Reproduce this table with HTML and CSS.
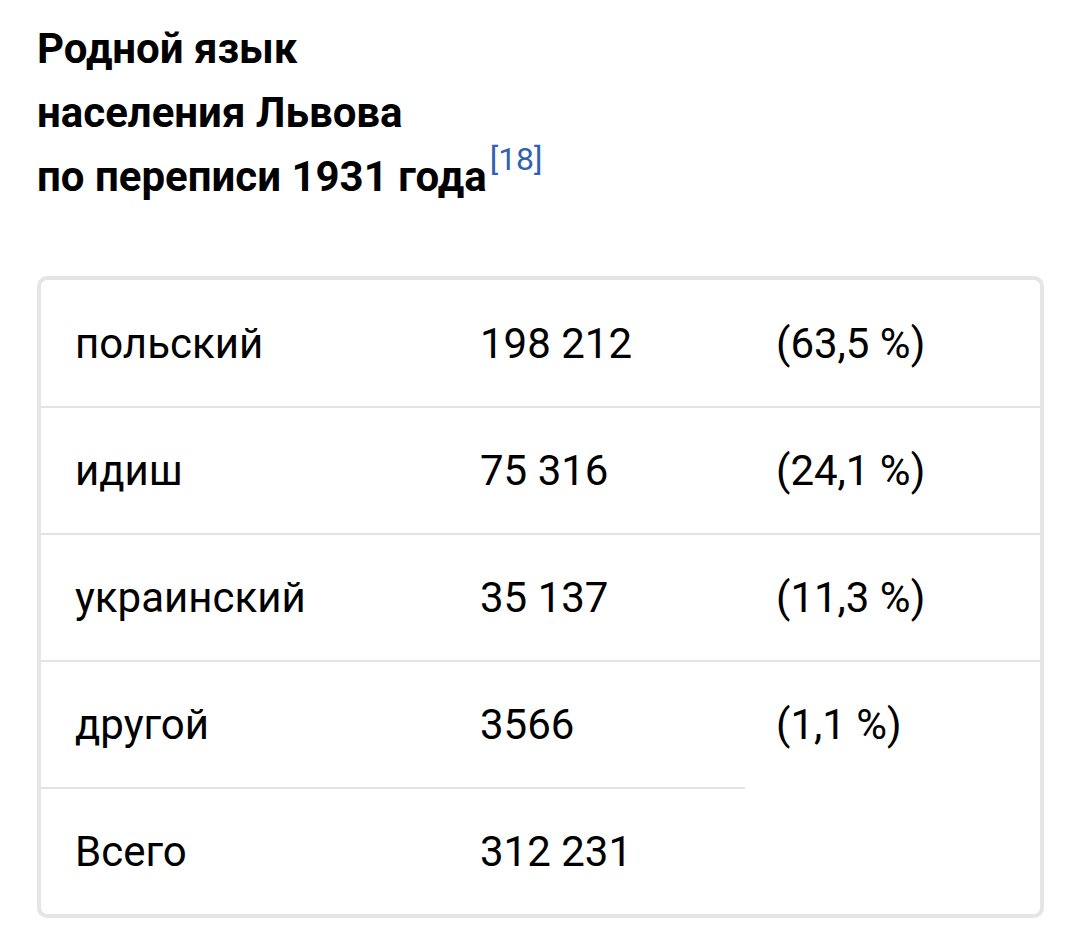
FILE: index.html
```html
<!DOCTYPE html>
<html lang="ru">
<head>
<meta charset="utf-8">
<title>Родной язык населения Львова</title>
<link rel="stylesheet" href="styles.css">
</head>
<body>
<div class="page">
  <h2 class="caption">Родной язык<br>населения Львова<br>по переписи 1931 года<sup class="ref">[18]</sup></h2>
  <table class="census">
    <colgroup>
      <col class="c1"><col class="c2"><col class="c3">
    </colgroup>
    <tbody>
      <tr><td>польский</td><td>198 212</td><td>(63,5 %)</td></tr>
      <tr><td>идиш</td><td>75 316</td><td>(24,1 %)</td></tr>
      <tr><td>украинский</td><td>35 137</td><td>(11,3 %)</td></tr>
      <tr><td>другой</td><td>3566</td><td>(1,1 %)</td></tr>
      <tr><td>Всего</td><td>312 231</td></tr>
    </tbody>
  </table>
</div>
</body>
</html>
```
FILE: styles.css
```css
html, body {
  margin: 0;
  padding: 0;
  background: #ffffff;
}
.page {
  padding: 17px 31px 0 37px;
  font-family: Roboto, "Noto Sans", "Liberation Sans", sans-serif;
  color: #000000;
}
.caption {
  margin: 0;
  font-size: 42px;
  font-weight: 700;
  line-height: 64px;
  padding-left: 0;
}
.ref {
  font-size: 32px;
  font-weight: 400;
  line-height: 0;
  color: #2f62b0;
  vertical-align: baseline;
  position: relative;
  top: -21px;
  margin-left: 3px;
}
.census {
  margin-top: 67px;
  width: 1007px;
  border: 4px solid #e5e5e5;
  border-radius: 10px;
  border-collapse: separate;
  border-spacing: 0;
  table-layout: fixed;
  font-size: 42px;
}
.c1 { width: 404px; }
.c2 { width: 300px; }
.c3 { width: 295px; }
.census td {
  height: 125px;
  padding: 0 0 0 34px;
  vertical-align: middle;
  border-top: 2px solid #e3e3e3;
  white-space: nowrap;
}
.census td:nth-child(2) {
  padding-left: 35px;
}
.census td:nth-child(3) {
  padding-left: 31px;
}
.census tr:first-child td {
  border-top: 0;
  height: 126px;
}
```
